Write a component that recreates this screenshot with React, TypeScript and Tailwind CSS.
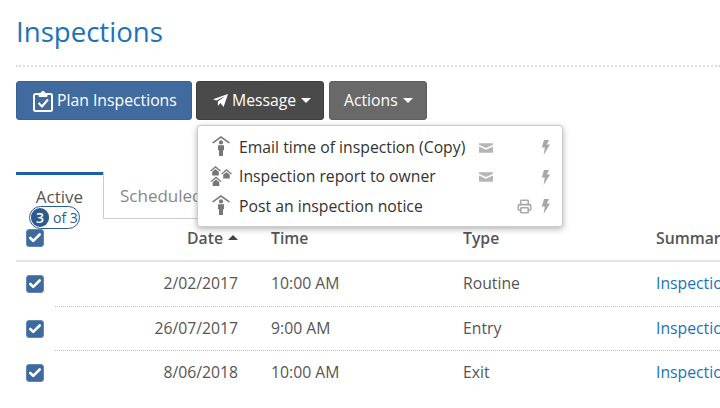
import { Check, Printer } from 'lucide-react'

const rows = [
	{ date: '2/02/2017', time: '10:00 AM', type: 'Routine' },
	{ date: '26/07/2017', time: '9:00 AM', type: 'Entry' },
	{ date: '8/06/2018', time: '10:00 AM', type: 'Exit' },
]

const menuItems = [
	{ label: 'Email time of inspection (Copy)', many: false, mail: true, print: false },
	{ label: 'Inspection report to owner', many: true, mail: true, print: false },
	{ label: 'Post an inspection notice', many: false, mail: false, print: true },
]

function Caret() {
	return <span className="ml-[5px] w-0 h-0 border-x-[5px] border-x-transparent border-t-[5px] border-t-white" />
}

function PersonHouse() {
	return (
		<svg width="18" height="20" viewBox="0 0 18 20" fill="#777" className="mt-[-3px]">
			<path d="M9 0 L18 6.4 L16.8 7.4 L9 2 L1.2 7.4 L0 6.4 Z" />
			<circle cx="9" cy="6.4" r="2.1" />
			<path d="M6 9.2 h6 v5 h-1 v5.8 h-4 v-5.8 h-1 Z" />
		</svg>
	)
}

function SmallHouse({ x, y }: { x: number; y: number }) {
	return (
		<g transform={`translate(${x} ${y})`} fill="#777">
			<path d="M5.5 0 L11 4.8 L10 5.6 L5.5 1.8 L1 5.6 L0 4.8 Z" />
			<path d="M2.2 5.8 L5.5 3 L8.8 5.8 V9.4 H2.2 Z" />
		</g>
	)
}

function Houses() {
	return (
		<svg width="22" height="21" viewBox="0 0 22 21" className="mt-[-2px]">
			<SmallHouse x={0} y={0} />
			<SmallHouse x={11} y={3} />
			<SmallHouse x={0.5} y={10.5} />
		</svg>
	)
}

function MailFilled() {
	return (
		<svg width="15" height="10" viewBox="0 0 15 10" fill="#b5b5b5">
			<path d="M0 0 H15 V1.6 L7.5 5 L0 1.6 Z" />
			<path d="M0 3.4 L7.5 6.8 L15 3.4 V10 H0 Z" />
		</svg>
	)
}

function Bolt() {
	return (
		<svg width="9" height="15" viewBox="0 0 9 15" fill="#a8a8a8">
			<path d="M3 0 H8 L5.8 4.6 H9 L2.6 15 L3.8 7.4 H0.8 Z" />
		</svg>
	)
}

function Checkbox() {
	return (
		<span className="flex items-center justify-center w-[18px] h-[18px] rounded-[3px] bg-[#3f6a9e] border border-[#5f88b8]">
			<Check size={14} strokeWidth={4.5} color="white" />
		</span>
	)
}

function MessageMenu() {
	return (
		<div className="absolute left-[197px] top-[125px] w-[366px] h-[102px] bg-white rounded-[3px] border border-[#ccc] shadow-[0_2px_6px_rgba(0,0,0,0.3)] pt-[7px] z-10">
			{menuItems.map(item => (
				<div key={item.label} className="flex items-center h-[29.5px] text-[15.75px] text-[#333]">
					<span className="w-[41px] flex justify-center pl-[5px]">{item.many ? <Houses /> : <PersonHouse />}</span>
					<span className="w-[240px] whitespace-nowrap">{item.label}</span>
					<span className="w-[14px] flex justify-end">{item.mail && <MailFilled />}</span>
					<span className="w-[39px] flex justify-end">
						{item.print && <Printer size={15} color="#aaa" strokeWidth={2.5} />}
					</span>
					<span className="ml-[9px]">
						<Bolt />
					</span>
				</div>
			))}
		</div>
	)
}

export default function App() {
	return (
		<div className="relative w-[720px] h-[408px] overflow-hidden bg-white font-['Open_Sans',sans-serif] text-[#555]">
			<div className="pl-4">
				<h1 className="text-[27.6px] leading-[38px] pt-3 text-[#1a73ba]">Inspections</h1>
				<div className="mt-[15px] border-t-2 border-dotted border-[#ddd]" />
				<div className="flex mt-[14px] text-[15.75px] text-white">
					<button className="flex items-center h-[39px] w-[176px] pl-[16px] rounded-[3px] bg-[#416b9f] border border-[#3a6191]">
						<svg width="20" height="22" viewBox="0 0 20 22" fill="none" stroke="white" strokeWidth="2" className="mr-[4px]">
							<path d="M6 4 H2.5 a1.5 1.5 0 0 0 -1.5 1.5 V19.5 a1.5 1.5 0 0 0 1.5 1.5 H17.5 a1.5 1.5 0 0 0 1.5 -1.5 V5.5 a1.5 1.5 0 0 0 -1.5 -1.5 H14" />
							<path d="M6 5.5 V3.5 H8 a2 2 0 0 1 4 0 H14 V6.5 H6 Z" fill="white" strokeWidth="1" />
							<path d="M5.5 13 L9 16.5 L15 9.5" strokeWidth="2.2" />
						</svg>
						Plan Inspections
					</button>
					<button className="flex items-center h-[39px] w-[128px] ml-[4px] pl-[16px] rounded-[3px] bg-[#4a4a4a] border border-[#3f3f3f]">
						<svg width="15" height="13" viewBox="0 0 15 13" fill="white" className="mr-[4px]">
							<path d="M15 0 L10.6 13 L7.4 9 L5 12 L4.8 7.6 L12 2.2 L3.4 6.6 L0 5.2 Z" />
						</svg>
						Message
						<Caret />
					</button>
					<button className="flex items-center h-[39px] w-[98px] ml-[5px] pl-[14px] rounded-[3px] bg-[#696969] border border-[#5f5f5f]">
						Actions
						<Caret />
					</button>
				</div>
			</div>

			<div className="relative flex mt-[52px] ml-4 h-[47px] text-[17px]">
				<div className="w-[87px] border-t-[3px] border-[#1a5fa8] flex justify-center pt-[9px] text-[#555]">Active</div>
				<div className="w-[200px] h-[47px] border-l border-b border-[#ccc] bg-white pl-[16px] pt-[11px] text-[#888]">
					Scheduled
				</div>
				<span className="absolute left-[13px] top-[34px] flex items-center h-[23px] w-[51px] rounded-full border border-[#2a5c94] bg-white text-[14px] text-[#2a5c94] pl-[1px] z-[1]">
					<span className="flex items-center justify-center w-[18px] h-[19px] rounded-full bg-[#2f5a8e] text-white mr-[4px] font-semibold">
						3
					</span>
					of 3
				</span>
			</div>

			<div className="grid grid-cols-[222px_33px_192px_193px_1fr] ml-4 h-[43px] pb-[1px] items-center border-b-2 border-[#e4e4e4] font-semibold text-[15.75px] text-[#555]">
				<div className="relative flex justify-end items-center">
					<span className="absolute left-[10px] top-[2px]">
						<Checkbox />
					</span>
					Date
					<span className="ml-[5px] mb-[4px] w-0 h-0 border-x-[5px] border-x-transparent border-b-[5px] border-b-[#444]" />
				</div>
				<div />
				<div>Time</div>
				<div>Type</div>
				<div className="whitespace-nowrap">Summary</div>
			</div>

			{rows.map((row, i) => (
				<div key={row.date} className="relative grid grid-cols-[222px_33px_192px_193px_1fr] ml-4 h-[44.5px] items-center text-[15.75px]">
					<div className="relative flex justify-end">
						<span className="absolute left-[10px] top-[3px]">
							<Checkbox />
						</span>
						{row.date}
					</div>
					<div />
					<div>{row.time}</div>
					<div>{row.type}</div>
					<div className="text-[#1a73ba] whitespace-nowrap">Inspection</div>
					{i < 2 && <div className="absolute left-[39px] right-0 bottom-0 border-b border-dotted border-[#bbb]" />}
				</div>
			))}

			<MessageMenu />
		</div>
	)
}
